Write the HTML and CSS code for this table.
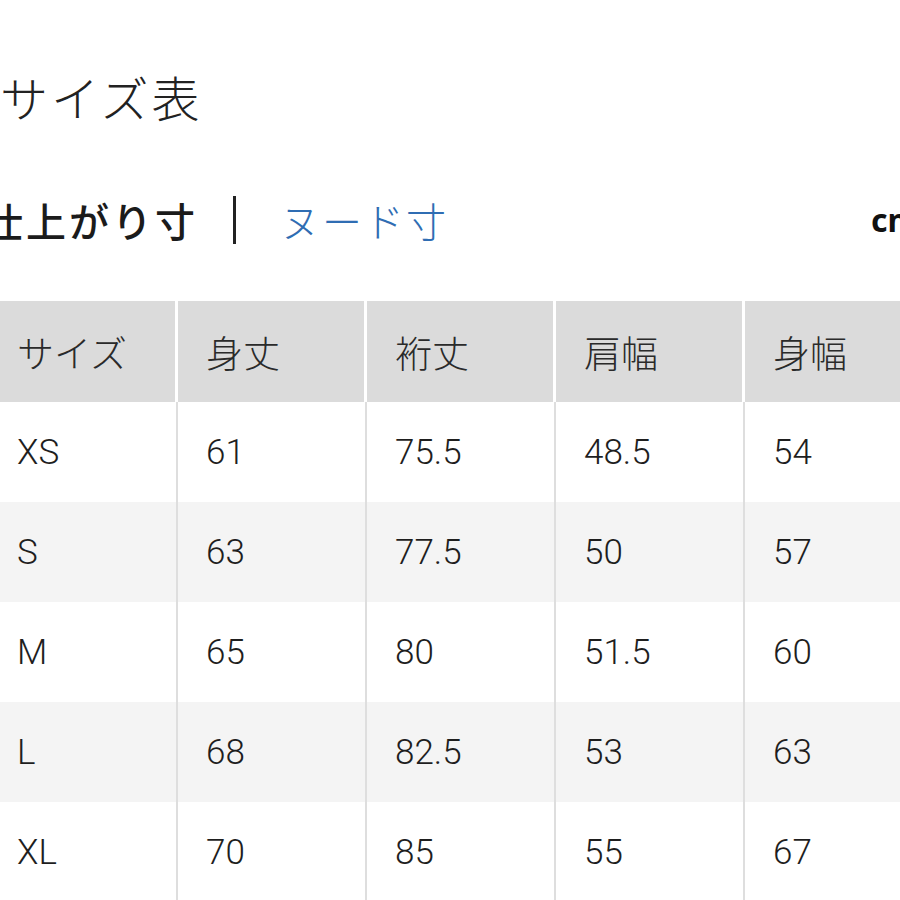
FILE: index.html
```html
<!DOCTYPE html>
<html lang="ja">
<head>
<meta charset="utf-8">
<link rel="stylesheet" href="styles.css">
</head>
<body>
<div class="page">
  <h1 class="title">サイズ表</h1>
  <div class="tabs">
    <div class="tab-group">
      <span class="tab active">仕上がり寸</span>
      <span class="sep"></span>
      <span class="tab link">ヌード寸</span>
    </div>
    <span class="unit">cm</span>
  </div>
  <div class="table">
    <div class="row head">
      <div class="cell">サイズ</div>
      <div class="cell">身丈</div>
      <div class="cell">裄丈</div>
      <div class="cell">肩幅</div>
      <div class="cell">身幅</div>
    </div>
    <div class="row">
      <div class="cell">XS</div><div class="cell">61</div><div class="cell">75.5</div><div class="cell">48.5</div><div class="cell">54</div>
    </div>
    <div class="row alt">
      <div class="cell">S</div><div class="cell">63</div><div class="cell">77.5</div><div class="cell">50</div><div class="cell">57</div>
    </div>
    <div class="row">
      <div class="cell">M</div><div class="cell">65</div><div class="cell">80</div><div class="cell">51.5</div><div class="cell">60</div>
    </div>
    <div class="row alt">
      <div class="cell">L</div><div class="cell">68</div><div class="cell">82.5</div><div class="cell">53</div><div class="cell">63</div>
    </div>
    <div class="row">
      <div class="cell">XL</div><div class="cell">70</div><div class="cell">85</div><div class="cell">55</div><div class="cell">67</div>
    </div>
  </div>
</div>
</body>
</html>
```
FILE: styles.css
```css
html, body {
  margin: 0;
  padding: 0;
  background: #ffffff;
  overflow: hidden;
  width: 900px;
  height: 900px;
}

.page {
  width: 900px;
  font-family: Roboto, "Noto Sans CJK JP", sans-serif;
  color: #222;
}

.title {
  margin: 66px 0 0 0;
  height: 60px;
  line-height: 60px;
  font-family: "Noto Sans CJK JP", sans-serif;
  font-weight: 300;
  font-size: 48px;
  letter-spacing: 3px;
  color: #222;
}

.tabs {
  margin-top: 64px;
  margin-left: -17px;
  height: 60px;
  display: flex;
  align-items: center;
}

.tab-group {
  flex: 0 0 888px;
  display: flex;
  align-items: center;
}

.tab {
  font-family: "Noto Sans CJK JP", sans-serif;
  font-size: 40px;
  line-height: 60px;
  letter-spacing: 3px;
}

.tab.active {
  font-weight: 500;
  color: #1b1b1b;
}

.tab.link {
  font-weight: 300;
  color: #2f6db3;
  letter-spacing: 2px;
}

.sep {
  width: 3px;
  height: 48px;
  background: #222;
  margin: 0 44px 0 35px;
}

.unit {
  flex: 0 0 auto;
  font-family: "Noto Sans", sans-serif;
  font-weight: 700;
  font-size: 32px;
  line-height: 60px;
  color: #111;
}

.table {
  margin-top: 51px;
  margin-left: -11px;
  width: 950px;
}

.row {
  display: grid;
  grid-template-columns: 189px 189px 189px 189px 194px;
  height: 100px;
  background: #ffffff;
}

.row.alt {
  background: #f4f4f4;
}

.row.head {
  height: 101px;
  background: #ffffff;
}

.cell {
  display: flex;
  align-items: center;
  padding-left: 28px;
  font-size: 35px;
  font-weight: 300;
  color: #1e1e1e;
  border-right: 2px solid #dedede;
}

.head .cell {
  background: #dbdbdb;
  border-right: 3px solid #ffffff;
  font-family: "Noto Sans CJK JP", sans-serif;
  font-weight: 300;
  font-size: 37px;
  color: #2a2a2a;
}
```
